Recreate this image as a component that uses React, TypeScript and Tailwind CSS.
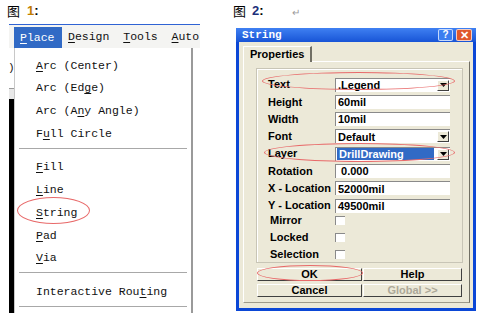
import React from "react";

// ============ Left: Place menu ============

const mono = "font-['Liberation_Mono',monospace]";
const sans = "font-['Liberation_Sans',Arial,sans-serif]";

interface MenuItemProps {
  pre?: string;
  u: string;
  post?: string;
}

const MenuItem: React.FC<MenuItemProps> = ({ pre = "", u, post = "" }) => (
  <div className="h-[22.7px] flex items-center pl-[21px] whitespace-pre">
    {pre}
    <span className="underline underline-offset-2">{u}</span>
    {post}
  </div>
);

const Separator: React.FC = () => (
  <div className="h-[8px]">
    <div className="mt-[3px] mx-[4px] h-[1px] bg-[#a8a8a8]" />
  </div>
);

const PlaceMenu: React.FC = () => (
  <div className={`ml-[9px] w-[191px] flex-1 flex flex-col overflow-hidden ${mono} text-[11.5px] text-[#111]`}>
    <div className="h-[1px] bg-[#2f63d4]" />
    <div className="h-[23px] bg-[#f4f4f2] flex items-start whitespace-pre">
      <div className="ml-[5px] mt-[2px] w-[48px] h-[21px] bg-[#316ac5] text-white flex items-center pl-[6px]">
        <span className="underline underline-offset-2">P</span>lace
      </div>
      <div className="h-[23px] flex items-center pl-[6px]">
        <span className="underline underline-offset-2">D</span>esign{"  "}
        <span className="underline underline-offset-2">T</span>ools{"  "}
        <span className="underline underline-offset-2">A</span>uto
      </div>
    </div>
    <div className="flex-1 flex">
      <div className="w-[5px] flex flex-col">
        <div className="h-[40px] bg-white flex items-center -ml-[1px] text-[11px]">)</div>
        <div className="h-[1px] bg-[#9a9a9a]" />
        <div className="h-[10px] bg-[#e8e8e8]" />
        <div className="flex-1 bg-black" />
      </div>
      <div className="w-[179px] bg-white border-l border-[#c8c8c8] border-r-2 border-r-[#9a9a9a] pt-[6px]">
        <MenuItem u="A" post="rc (Center)" />
        <MenuItem pre="Arc (Ed" u="g" post="e)" />
        <MenuItem pre="Arc (A" u="n" post="y Angle)" />
        <MenuItem pre="F" u="u" post="ll Circle" />
        <Separator />
        <MenuItem u="F" post="ill" />
        <MenuItem u="L" post="ine" />
        <MenuItem u="S" post="tring" />
        <MenuItem u="P" post="ad" />
        <MenuItem u="V" post="ia" />
        <Separator />
        <MenuItem pre="Interactive Rou" u="t" post="ing" />
        <div className="mt-[3px] mx-[4px] h-[1px] bg-[#a8a8a8]" />
      </div>
      <div className="flex-1 bg-white" />
    </div>
  </div>
);

// ============ Right: String dialog ============

const DropArrow: React.FC = () => (
  <div className="w-[12px] h-[11px] mr-[1px] bg-[#ece9d8] border-t border-l border-t-white border-l-white border-b border-r border-b-[#404040] border-r-[#404040] flex items-center justify-center">
    <svg width="7" height="4" viewBox="0 0 7 4">
      <path d="M0 0h7L3.5 4z" fill="#000" />
    </svg>
  </div>
);

interface FieldProps {
  label: string;
  value: string;
  drop?: boolean;
  selected?: boolean;
  short?: boolean;
}

const Field: React.FC<FieldProps> = ({ label, value, drop, selected, short }) => (
  <div className={`${short ? "h-[15px]" : "h-[17.3px]"} flex items-start pt-[1.5px]`}>
    <div className="w-[78px] pl-[11px] h-[14px] flex items-center whitespace-nowrap">{label}</div>
    <div className="w-[115px] h-[14px] bg-white border-t border-l border-[#8a8a8a] flex items-center justify-between">
      <span
        className={`h-[12px] flex items-center whitespace-pre pl-[2px] ${
          selected ? "bg-[#316ac5] text-white flex-1 mr-[3px] ml-[1px]" : ""
        }`}
      >
        {value}
      </span>
      {drop && <DropArrow />}
    </div>
  </div>
);

const CheckRow: React.FC<{ label: string }> = ({ label }) => (
  <div className="h-[17px] flex items-center">
    <div className="w-[78px] pl-[13px] whitespace-nowrap">{label}</div>
    <div className="w-[10px] h-[9px] bg-white border-t border-l border-[#8a8a8a]" />
  </div>
);

const XpButton: React.FC<{ label: string; wide?: boolean; disabled?: boolean }> = ({ label, wide, disabled }) => (
  <div
    className={`${wide ? "w-[105px]" : "w-[99px]"} h-[13px] bg-[#ece9d8] border-t border-l border-t-white border-l-white border-b border-r border-b-[#404040] border-r-[#404040] flex items-center justify-center ${
      disabled ? "text-[#aca899]" : "text-black"
    }`}
  >
    {label}
  </div>
);

const StringDialog: React.FC = () => (
  <div className={`ml-[11px] mt-[4px] w-[240px] h-[283px] bg-[#0b47d6] flex flex-col ${sans} text-[11px] font-bold text-black`}>
    <div className="h-[14px] bg-gradient-to-b from-[#3f80f2] to-[#1854d6] flex items-center pl-[6px] pr-[4px]">
      <span className={`${mono} text-[11px] font-bold text-white flex-1`}>String</span>
      <div className="w-[15px] h-[12px] rounded-[2px] bg-[#3c7ef0] border border-white/70 flex items-center justify-center text-white text-[10px] leading-none">?</div>
      <div className="ml-[3px] w-[16px] h-[12px] rounded-[2px] bg-[#e0582c] border border-white/70 flex items-center justify-center text-white text-[11px] leading-none">✕</div>
    </div>
    <div className="flex-1 mx-[3px] mb-[3px] bg-[#ece9d8] flex flex-col">
      <div className="h-[19px] pt-[4px] pl-[4px] flex">
        <div className="w-[69px] h-[16px] bg-[#ece9d8] border-t border-l border-white border-r-2 border-r-[#716f64] pl-[6px] flex items-center relative z-10">
          Properties
        </div>
      </div>
      <div className="h-[242px] ml-[4px] mr-[3px] border-t border-l border-white border-r border-b border-r-[#716f64] border-b-[#9d9a8a] flex flex-col">
        <div className="mt-[6px] ml-[12px] mr-[6px] h-[195px] border border-[#c8c5b6] shadow-[inset_1px_1px_0_#fff] pt-[7px]">
          <Field label="Text" value=".Legend" drop />
          <Field label="Height" value="60mil" />
          <Field label="Width" value="10mil" />
          <Field label="Font" value="Default" drop />
          <Field label="Layer" value="DrillDrawing" drop selected />
          <Field label="Rotation" value=" 0.000" />
          <Field label="X - Location" value="52000mil" />
          <Field label="Y - Location" value="49500mil" short />
          <CheckRow label="Mirror" />
          <CheckRow label="Locked" />
          <CheckRow label="Selection" />
        </div>
        <div className="mt-[5px] ml-[13px] flex flex-col gap-[3px]">
          <div className="flex gap-[1px]">
            <XpButton label="OK" wide />
            <XpButton label="Help" />
          </div>
          <div className="flex gap-[1px]">
            <XpButton label="Cancel" wide />
            <XpButton label="Global >>" disabled />
          </div>
        </div>
      </div>
    </div>
  </div>
);

// ============ Page ============

export default function App() {
  return (
    <div className="w-[480px] h-[313px] bg-white flex relative overflow-hidden">
      <div className="w-[225px] flex flex-col">
        <div className="h-[24px] pl-[7px] pt-[3px] flex items-start text-[13px] leading-[16px]">
          <span className="font-['Noto_Sans_CJK_SC',sans-serif] text-black">图</span>
          <span className={`${sans} font-bold ml-[7px] text-[#c07d00]`}>1</span>
          <span className={`${sans} font-bold text-black`}>:</span>
        </div>
        <PlaceMenu />
      </div>
      <div className="flex-1 flex flex-col">
        <div className="h-[24px] pl-[8px] pt-[3px] flex items-start text-[13px] leading-[16px]">
          <span className="font-['Noto_Sans_CJK_SC',sans-serif] text-black">图</span>
          <span className={`${sans} font-bold ml-[6px] text-[#1c2f7a]`}>2</span>
          <span className={`${sans} font-bold text-black`}>:</span>
          <span className={`${sans} ml-[28px] mt-[2px] text-[10px] text-[#9a9a9a]`}>↵</span>
        </div>
        <StringDialog />
      </div>

      {/* red highlight ellipses */}
      <div className="absolute left-[17px] top-[197px] w-[73px] h-[27px] rounded-[50%] border border-[#e86a6a]" />
      <div className="absolute left-[262px] top-[72px] w-[193px] h-[18px] rounded-[50%] border border-[#e86a6a]" />
      <div className="absolute left-[264px] top-[143px] w-[191px] h-[19px] rounded-[50%] border border-[#e86a6a]" />
      <div className="absolute left-[257px] top-[265px] w-[106px] h-[16px] rounded-[50%] border border-[#e86a6a]" />
    </div>
  );
}
